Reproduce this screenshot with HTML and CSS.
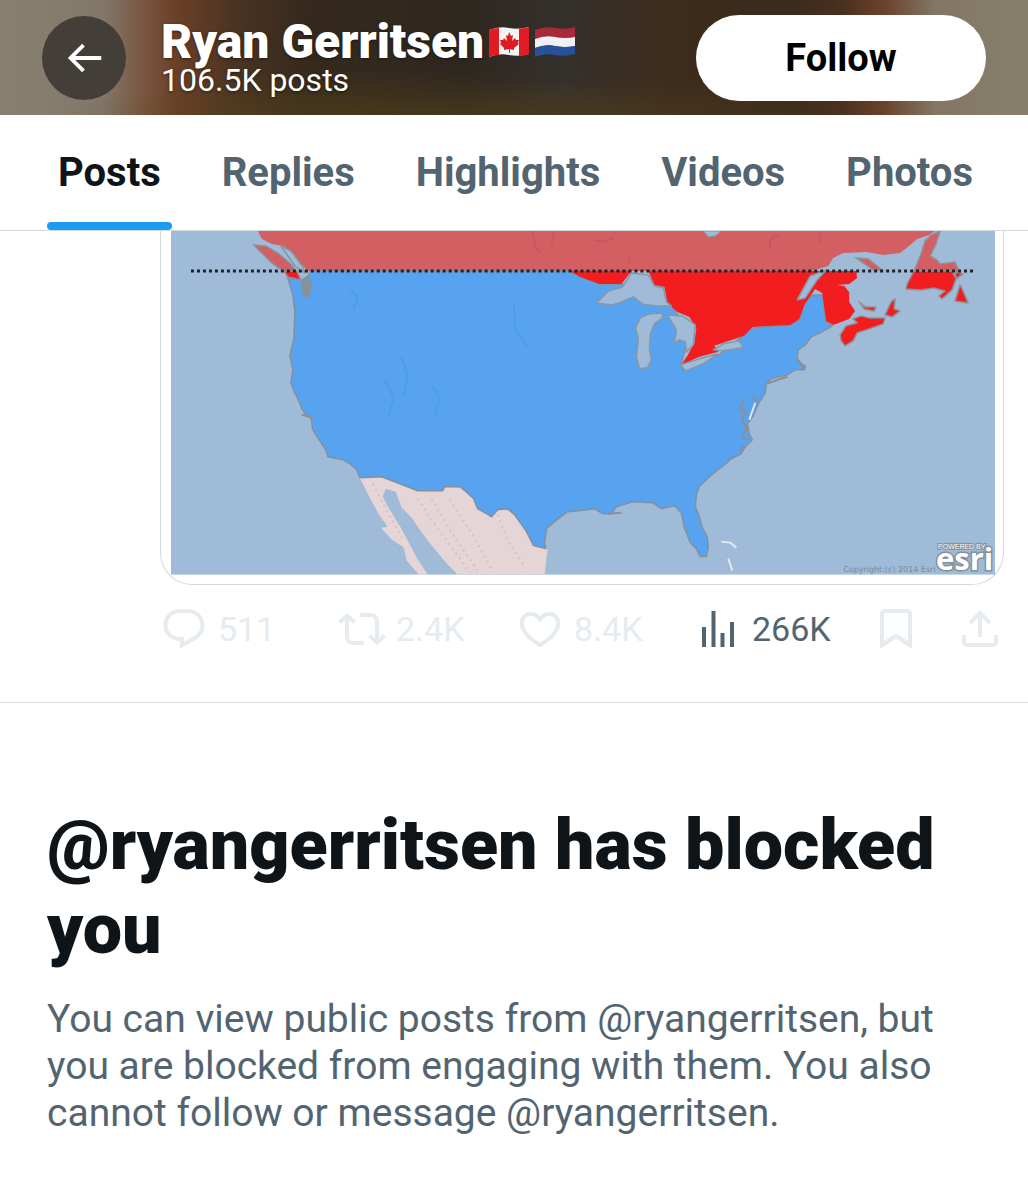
FILE: index.html
```html
<!DOCTYPE html>
<html lang="en">
<head>
    <meta charset="UTF-8">
    <meta name="viewport" content="width=device-width, initial-scale=1.0">
    <title>Ryan Gerritsen</title>
    <link rel="stylesheet" href="styles.css">
</head>
<body>
    <header class="header">
        <button type="button" class="back" aria-label="Back">
            <svg class="back-icon" viewBox="0 0 24 24"><path d="M7.414 13l5.043 5.04-1.414 1.42L3.586 12l7.457-7.46 1.414 1.42L7.414 11H21v2H7.414z"/></svg>
        </button>
        <div class="profile">
            <h1 class="name">Ryan Gerritsen
                <svg class="flag" viewBox="0 0 42 32" role="img" aria-label="Canada">
                    <path fill="#f4f4f4" d="M1 4Q11 0 21 2T41 1V28Q31 31 21 29T1 31z"/>
                    <path fill="#e01b22" d="M1 4Q6 2 11 2V29Q6 29 1 31zM31 2.500Q36 2.500 41 1V28Q36 30 31 30z"/>
                    <path fill="#e01b22" d="M21 6l2 4 2-1-1 6 3-3 1 2 3 0-1 3 1 1-5 4 0 2-4-1v4h-1v-4l-5 1 0-2-4-4 1-1-1-3 3 0 1-2 3 3-1-6 2 1z"/>
                </svg>
                <svg class="flag" viewBox="0 0 42 32" role="img" aria-label="Netherlands">
                    <path fill="#a82a3a" d="M1 4Q11 0 21 2T41 1V11Q31 13 21 11T1 13z"/>
                    <path fill="#f1f1f3" d="M1 13Q11 9 21 11T41 11V20Q31 22 21 20T1 22z"/>
                    <path fill="#28519b" d="M1 22Q11 18 21 20T41 20V28Q31 31 21 29T1 31z"/>
                </svg>
            </h1>
            <p class="count">106.5K posts</p>
        </div>
        <button type="button" class="follow">Follow</button>
    </header>

    <nav class="tabs">
        <a href="#posts" class="tab active">Posts</a>
        <a href="#replies" class="tab">Replies</a>
        <a href="#highlights" class="tab">Highlights</a>
        <a href="#videos" class="tab">Videos</a>
        <a href="#photos" class="tab">Photos</a>
    </nav>

    <article class="post">
        <div class="media">
            <svg class="map" viewBox="171 231 825 344" role="img" aria-label="Map of North America with a dotted line">
                <rect x="171" y="231" width="825" height="344" fill="#9fbbd8"/>
                <!-- Mexico -->
                <path fill="#e5d5d7" d="M360 478L384 476 418 490 444 491 445 487 460 488 475 499 490 517 500 509 510 511 525 528 533 545 548 550 545 575H458L447 564 432 546 423 534 412 518 402 508 396 492 386 489 383 497 390 510 400 526 408 541 418 560 428 575H419L407 561 404 548 392 540 381 528 388 527 378 513 370 498z"/>
                <g fill="none" stroke="#d3c1c5" stroke-width="2" stroke-dasharray="2 4">
                    <path d="M418 499L436 526 461 560 470 573M432 499L452 533 478 571M498 515L508 541 526 568M450 500L473 535 492 570M373 484L387 511 402 538"/>
                </g>
                <!-- Canada north of the line -->
                <path fill="#d35f63" d="M258 231L262 239 272 244 284 246 294 254 302 265 308 271H812L829 266 834 258 844 253 867 252 884 255 901 253 910 246 918 239 930 235 936 231z"/>
                <path fill="#d35f63" stroke="#8e9198" stroke-width="1.500" d="M254 245L266 246 279 254 291 264 296 271H283L272 263zM857 258L869 259 883 270H874zM932 235L941 231 937 244 931 256 938 260 941 264 956 262 960 271H915L922 254 926 241z"/>
                <path fill="#9fbbd8" stroke="#8e9198" d="M704 231L709 237 716 236 722 231z"/>
                <g fill="none" stroke="#c25a60" stroke-width="2">
                    <path d="M533 231L536 248 541 252M554 233L552 246M594 240L604 242 614 238M630 256V265M771 248Q768 237 780 235M820 232L822 243"/>
                </g>
                <!-- United States -->
                <path fill="#57a3f0" stroke="#83909e" stroke-width="1.500" stroke-linejoin="round" d="M287 275L300 280 307 285 310 271H570L581 277 600 284 624 284 640 300 672 306 690 330 682 365 720 355 753 328 790 325 800 320 806 303 813 295 823 295 827 322 833 326 821 333 812 337 806 345 799 350 798 358 800 363 806 366 805 370 796 370 788 375 772 379 767 384 766 393 759 404 754 416 748 424 750 434 753 440 746 447 742 454 732 459 724 466 716 472 708 479 700 487 697 495 696 507 700 517 703 528 708 538 709 548 707 557 701 557 697 549 691 543 685 528 682 513 675 506 662 509 653 503 633 502 617 507 612 514 603 514 595 509 579 511 568 512 555 522 547 529 545 543 546 549 534 546 527 532 515 515 508 509 498 510 492 517 478 509 474 499 461 487H445L443 491H418L382 477 360 478 357 470 350 464 343 460 328 457 326 450 320 441 313 430 311 417 306 415 302 409 299 401 294 391 291 383 293 370 290 356 294 339 295 312 293 295z"/>
                <path fill="none" stroke="#509ceb" stroke-width="2" d="M351 289L358 298 354 308M402 357L408 377 403 397M514 305L516 331 529 347M385 380L394 398 389 416M433 387L440 399 435 415"/>
                <!-- Canada south of the line -->
                <path fill="#f21d1f" d="M570 271L581 277 600 284 622 284 632 271zM649 271L655 285 665 287 668 303 678 312 690 317 697 328 695 343 688 356 682 365 700 357 719 352 715 346 733 340 745 336 753 327 791 325 800 319 805 305 816 289 823 293 827 321 834 325 850 319 856 311 850 302 850 292 845 286 838 285 850 284 858 278 857 271z"/>
                <path fill="#f21d1f" stroke="#8e9198" stroke-width="1.500" stroke-linejoin="round" d="M284 271H297L301 280 288 277zM841 335L847 326 858 323 854 319 862 316 870 318 886 318 884 324 870 329 858 333 854 341 846 346 842 341zM886 315L892 302 896 299 895 309 901 311 893 317zM860 302L866 307 877 307 875 311 865 309zM915 271H953L957 279 953 290 943 299 940 296 946 291 935 288 922 290 907 289 908 284zM961 285L964 291 969 303 956 301zM956 271L964 274 957 279z"/>
                <!-- lakes, gulf and sound -->
                <g fill="#9fbbd8" stroke="#8797a5" stroke-width="1.500" stroke-linejoin="round">
                    <path d="M597 303L609 291 623 287 632 273 649 275 655 286 664 288 667 302 672 306 656 306 643 304 634 297 622 302 613 305z"/>
                    <path d="M636 328L641 318 650 314 663 313 663 318 655 324 651 334 650 350 652 360 648 368 640 369 637 357 639 338z"/>
                    <path d="M668 315L683 316 696 325 694 345 687 352 686 342 680 340 675 344 677 330z"/>
                    <path d="M681 365L700 359 718 354 704 364 686 371zM714 350L724 344 740 341 744 348 723 351z"/>
                    <path d="M798 300L811 276 827 270 818 280 806 298zM281 246L291 251 303 267 305 273 296 267 288 256z"/>
                </g>
                <path fill="#85929c" d="M301 280L308 275 313 285 309 298 303 296z"/>
                <path fill="none" stroke="#8b8f96" stroke-width="2" d="M745 398L742 407 746 413 742 421 748 428 743 436 750 440M738 409L748 414M754 396L757 403M745 446L739 451M302 415L313 418M608 514L622 513M767 384L788 377M806 369L798 359"/>
                <path fill="none" stroke="#e3e9ef" stroke-width="2" d="M722 542L731 543 737 548M729 559L733 571M756 403L750 420"/>
                <line x1="191" y1="271" x2="977" y2="271" stroke="#20222a" stroke-width="3" stroke-dasharray="3 3"/>
                <text x="844" y="572" class="copyright">Copyright:(c) 2014 Esri</text>
                <text x="939" y="549" class="powered">POWERED BY</text>
                <text x="937" y="570" class="esri">esri</text>
            </svg>
        </div>
        <div class="actions">
            <button type="button" class="action" disabled aria-label="Replies">
                <svg class="icon" viewBox="0 0 24 24"><path d="M1.751 10c0-4.420 3.584-8 8.005-8h4.366c4.490 0 8.129 3.640 8.129 8.130 0 2.960-1.607 5.680-4.196 7.110l-8.054 4.460v-3.690h-.067c-4.490.100-8.183-3.510-8.183-8.010zm8.005-6c-3.317 0-6.005 2.690-6.005 6 0 3.370 2.770 6.080 6.138 6.010l.351-.010h1.761v2.300l5.087-2.810c1.951-1.080 3.163-3.130 3.163-5.360 0-3.390-2.744-6.130-6.129-6.130H9.756z"/></svg>
                <span>511</span>
            </button>
            <button type="button" class="action" disabled aria-label="Reposts">
                <svg class="icon" viewBox="0 0 24 24"><path d="M4.500 3.880l4.432 4.140-1.364 1.460L5.500 7.550V16c0 1.100.896 2 2 2H13v2H7.500c-2.209 0-4-1.790-4-4V7.550L1.432 9.480.068 8.020 4.500 3.880zM16.500 6H11V4h5.500c2.209 0 4 1.790 4 4v8.450l2.068-1.930 1.364 1.460-4.432 4.140-4.432-4.140 1.364-1.460 2.068 1.930V8c0-1.100-.896-2-2-2z"/></svg>
                <span>2.4K</span>
            </button>
            <button type="button" class="action" disabled aria-label="Likes">
                <svg class="icon" viewBox="0 0 24 24"><path class="heart" d="M12 20C7.500 17.300 5 14.800 3.900 12.700 2.700 10.300 2.700 8.300 3.400 6.900 4.200 5.400 5.600 4.500 7.200 4.500 9.200 4.400 10.900 5.500 12 7.200 13.100 5.500 14.800 4.400 16.800 4.500 18.400 4.500 19.800 5.400 20.600 6.900 21.300 8.300 21.300 10.300 20.100 12.700 19 14.800 16.500 17.300 12 20z"/></svg>
                <span>8.4K</span>
            </button>
            <a href="#views" class="action views">
                <svg class="icon" viewBox="0 0 24 24"><path d="M8.750 21V3h2v18h-2zM18 21V8.500h2V21h-2zM4 21l.004-10h2L6 21H4zm9.248 0v-7h2v7h-2z"/></svg>
                <span>266K</span>
            </a>
            <button type="button" class="action" disabled aria-label="Bookmark">
                <svg class="icon" viewBox="0 0 24 24"><path d="M4 4.500C4 3.120 5.119 2 6.500 2h11C18.881 2 20 3.120 20 4.500v17.440l-8-5.210-8 5.210V4.500zM6.500 4c-.276 0-.5.220-.5.500v13.560l6-3.790 6 3.790V4.500c0-.280-.224-.5-.5-.5h-11z"/></svg>
            </button>
            <button type="button" class="action" disabled aria-label="Share">
                <svg class="icon" viewBox="0 0 24 24"><path d="M12 2.590l5.700 5.700-1.410 1.420L13 6.410V16h-2V6.410l-3.300 3.300-1.410-1.420L12 2.590zM21 15l-.020 3.510c0 1.380-1.120 2.490-2.500 2.490H5.500C4.110 21 3 19.880 3 18.500V15h2v3.500c0 .280.220.5.5.5h12.980c.280 0 .5-.220.5-.5L19 15h2z"/></svg>
            </button>
        </div>
    </article>

    <section class="blocked">
        <h2>@ryangerritsen has blocked you</h2>
        <p>You can view public posts from @ryangerritsen, but you are blocked from engaging with them. You also cannot follow or message @ryangerritsen.</p>
    </section>
</body>
</html>
```
FILE: styles.css
```css
* {
    box-sizing: border-box;
}
body {
    font-family: Roboto, "Liberation Sans", sans-serif;
    background-color: #fff;
    color: #0f1419;
    margin: 0;
}
h1, h2, p {
    margin: 0;
}
button {
    font-family: inherit;
    border: none;
    cursor: pointer;
}
.header {
    display: flex;
    align-items: center;
    height: 115px;
    padding: 0 42px;
    background: radial-gradient(ellipse at 36% 115%, rgba(90, 70, 24, 0.7), transparent 35%),
        radial-gradient(ellipse at 62% 115%, rgba(82, 62, 28, 0.6), transparent 30%),
        linear-gradient(to right, #878071 0%, #827869 10%, #7a5642 14%, #6b4029 17%, #4a3322 23%, #35291d 30%, #2e2720 45%, #34302c 55%, #3d2c1c 65%, #3a2a1b 77%, #4a3020 82%, #6b422b 86%, #827764 91%, #877f6c 100%);
}
.back {
    display: flex;
    align-items: center;
    justify-content: center;
    width: 84px;
    height: 84px;
    padding: 0;
    border-radius: 50%;
    background-color: #443e39;
}
.back-icon {
    width: 46px;
    height: 46px;
    fill: #fff;
}
.profile {
    flex: 1;
    margin-left: 35px;
    color: #fff;
    text-shadow: 0 1px 3px rgba(0, 0, 0, 0.5);
}
.name {
    display: flex;
    align-items: center;
    gap: 4px;
    font-size: 48px;
    font-weight: 900;
    line-height: 44px;
    white-space: nowrap;
}
.flag {
    width: 42px;
    height: 32px;
}
.count {
    font-size: 32px;
    line-height: 32px;
}
.follow {
    width: 290px;
    height: 86px;
    border-radius: 43px;
    background-color: #fff;
    color: #000;
    font-size: 38px;
    font-weight: bold;
}
.tabs {
    display: flex;
    justify-content: space-between;
    height: 116px;
    padding: 0 44px 0 47px;
    border-bottom: 1px solid #cfd9de;
}
.tab {
    display: flex;
    align-items: center;
    padding: 0 11px;
    border-bottom: 8px solid transparent;
    border-top: 8px solid transparent;
    color: #536471;
    font-size: 40px;
    font-weight: bold;
    text-decoration: none;
}
.active {
    position: relative;
    color: #0f1419;
}
.active::after {
    content: "";
    position: absolute;
    left: 0;
    right: 0;
    bottom: -8px;
    height: 8px;
    border-radius: 4px;
    background-color: #1d9bf0;
}
.post {
    padding: 0 24px 49px 160px;
    border-bottom: 1px solid #d5dce0;
}
.media {
    padding: 0 8px 9px 10px;
    border: 1px solid #cfd9de;
    border-top: none;
    border-radius: 0 0 32px 32px;
}
.map {
    display: block;
    width: 100%;
}
.copyright {
    fill: #748ba5;
    font: 8px "DejaVu Sans", sans-serif;
}
.powered {
    fill: #fff;
    stroke: #84909b;
    stroke-width: 2px;
    paint-order: stroke;
    font: 7px "Liberation Sans", sans-serif;
}
.esri {
    fill: #fff;
    stroke: #84909b;
    stroke-width: 3px;
    paint-order: stroke;
    font: bold 31px "Open Sans", sans-serif;
}
.actions {
    display: grid;
    grid-template-columns: repeat(4, 1fr) 84px 48px;
    margin-top: 20px;
}
.action {
    display: flex;
    align-items: center;
    gap: 10px;
    height: 48px;
    padding: 0;
    background: none;
    color: #e6ebef;
    font-size: 34px;
    text-decoration: none;
}
.action:disabled {
    cursor: default;
}
.views {
    color: #536471;
}
.icon {
    width: 48px;
    height: 48px;
    fill: currentColor;
}
.heart {
    fill: none;
    stroke: currentColor;
    stroke-width: 2px;
}
.blocked {
    padding: 100px 47px 60px;
}
.blocked h2 {
    font-size: 70px;
    font-weight: 900;
    line-height: 84px;
}
.blocked p {
    margin-top: 25px;
    color: #536471;
    font-size: 39px;
    line-height: 47px;
}
```
